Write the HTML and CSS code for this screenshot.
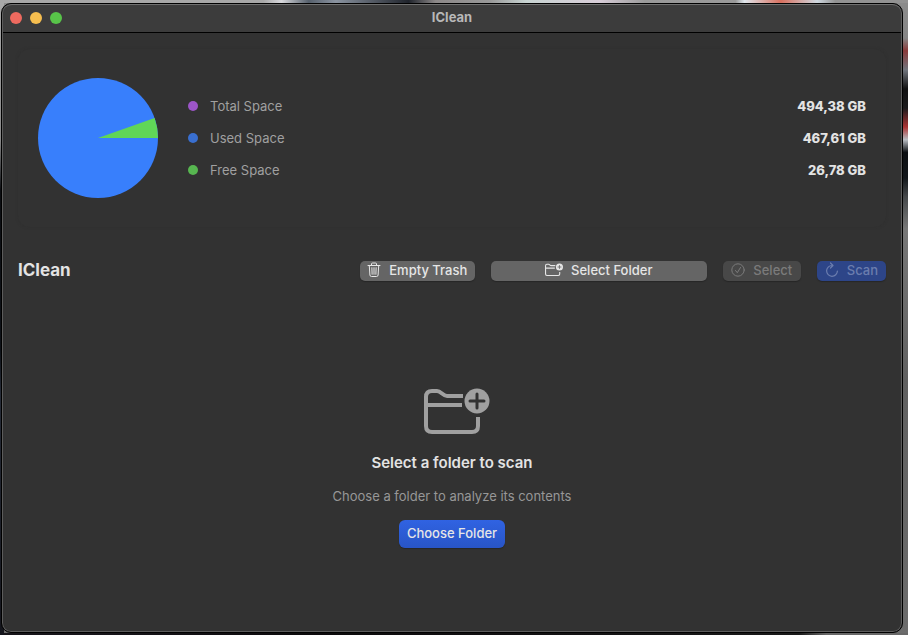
FILE: index.html
```
<!DOCTYPE html>
<html lang="en">
<head>
<meta charset="utf-8">
<title>IClean</title>
<link rel="stylesheet" href="styles.css">
</head>
<body>
<div class="window">
  <header class="titlebar">
    <div class="lights">
      <button class="light close" aria-label="Close"></button>
      <button class="light minimize" aria-label="Minimize"></button>
      <button class="light zoom" aria-label="Zoom"></button>
    </div>
    <div class="window-title">IClean</div>
  </header>
  <main class="content">
    <section class="card">
      <svg class="pie" viewBox="0 0 120 120" aria-hidden="true">
        <circle cx="60" cy="60" r="60" fill="#387ffc"/>
        <path d="M60 60H120A60 60 0 0 0 116.600 40Z" fill="#60d657"/>
      </svg>
      <dl class="legend">
        <div class="row"><dt><span class="dot total"></span>Total Space</dt><dd>494,38 GB</dd></div>
        <div class="row"><dt><span class="dot used"></span>Used Space</dt><dd>467,61 GB</dd></div>
        <div class="row"><dt><span class="dot free"></span>Free Space</dt><dd>26,78 GB</dd></div>
      </dl>
    </section>
    <div class="toolbar">
      <h1>IClean</h1>
      <button class="btn trash">
        <svg width="14" height="16" viewBox="0 0 14 16" fill="none" stroke="currentColor" stroke-linecap="round" stroke-linejoin="round"><path d="M1 3.500H13M4.500 3.300V2Q4.500 1 5.500 1H8.500Q9.500 1 9.500 2V3.300M2.300 3.700L2.900 13Q3 14.500 4.500 14.500H9.500Q11 14.500 11.100 13L11.700 3.700M4.900 5.700L5.100 12.300M7 5.700V12.300M9.100 5.700L8.900 12.300"/></svg>
        Empty Trash
      </button>
      <button class="btn folder">
        <svg width="18" height="14" viewBox="0 0 66 48" fill="none" stroke="currentColor" stroke-width="4"><path d="M38 8H22C18 8 17 3 13 3H7Q2 3 2 8V39Q2 44 7 44H49Q54 44 54 39V31M2 17H36"/><circle cx="53" cy="13" r="13" fill="currentColor" stroke="none"/><path d="M53 6V20M46 13H60" stroke="#656565" stroke-width="3"/></svg>
        Select Folder
      </button>
      <button class="btn select" disabled>
        <svg width="14" height="14" viewBox="0 0 14 14" fill="none" stroke="currentColor" stroke-linecap="round" stroke-linejoin="round"><circle cx="7" cy="7" r="6.200"/><path d="M4.500 7.500L6.300 9.700L9.500 4.500"/></svg>
        Select
      </button>
      <button class="btn scan" disabled>
        <svg width="14" height="16" viewBox="0 0 14 16" fill="none" stroke="currentColor" stroke-width="1.200" stroke-linecap="round" stroke-linejoin="round"><path d="M8 3.500H7A5.400 5.400 0 1 0 12.400 9M5.500 1L8 3.500L5.500 6"/></svg>
        Scan
      </button>
    </div>
    <section class="empty">
      <svg class="empty-icon" width="76" height="48" viewBox="-10 0 76 48" fill="none" stroke="currentColor" stroke-width="4" aria-hidden="true"><path d="M39 8H23C19 8 17 3 13 3H8Q2 3 2 9V38Q2 44 8 44H48Q54 44 54 38V29M2 17H38"/><circle cx="53" cy="13" r="12.500" fill="currentColor" stroke="none"/><path d="M53 6V20M46 13H60" stroke="#323232" stroke-width="3" stroke-linecap="round"/></svg>
      <h2>Select a folder to scan</h2>
      <p>Choose a folder to analyze its contents</p>
      <button class="btn choose">Choose Folder</button>
    </section>
  </main>
</div>
</body>
</html>
```
FILE: styles.css
```
* { box-sizing: border-box; }

body {
  margin: 0;
  min-height: 100vh;
  display: flex;
  padding: 3px 5px 2px 1px;
  background:
    linear-gradient(90deg, #a8a8a8 29%, #d8d8dc 31%, #56606c 34%, #8a93a0 37%, #20242c 45%, #8c8888 48%, #999 54%, #c8d4d2 58%, #d8cdd8 66%, #9a9a9a 71%, #999 81%, #dfe6ec 82%, #d8705f 86%, #cfd8e0 90%, #929292 92%) top / 100% 3px no-repeat,
    linear-gradient(#aaa 0, #8a8a8a 22%, #0c0e12 30%, #0e1218 55%, #262c38 62%, #14151c 100%) left / 4px 100% no-repeat,
    linear-gradient(90deg, #17151a 10%, #0c0a0c 35%, #191919 88%, #686868 91%) bottom / 100% 2px no-repeat,
    linear-gradient(#8c8c8c 0, #858585 6%, #8a3a3a 8%, #70747c 11%, #111 14%, #1a1a1c 17%, #a33 20%, #b8bcc2 22%, #0c0f12 24%, #12161a 28%, #45484a 31%, #777 36%, #606060 60%, #6c6c6c 100%);
  font-family: Inter, "Liberation Sans", sans-serif;
  font-size: 13px;
  line-height: 16px;
  color: #e3e3e3;
}

h1, h2, p, dl, dd { margin: 0; }

.window {
  flex: 1;
  display: flex;
  flex-direction: column;
  border: 1px solid #000;
  border-radius: 10px;
  background: #323232;
  box-shadow: inset 0 0 0 1px #5c5c5c;
}

.titlebar {
  display: grid;
  grid-template-columns: 1fr auto 1fr;
  align-items: center;
  height: 29px;
  margin: 0 1px;
  padding: 0 7px;
  border-bottom: 1px solid #000;
  border-top: 1px solid #707070;
  border-radius: 9px 9px 0 0;
  background: #3c3c3c;
}

.lights { display: flex; gap: 8px; padding-bottom: 2px; }

.light {
  width: 12px;
  height: 12px;
  padding: 0;
  border: 0;
  border-radius: 50%;
}

.close { background: #ee6a5f; }
.minimize { background: #f6be4f; }
.zoom { background: #58c449; }

.window-title { padding-bottom: 3px; font-weight: 700; color: #b8b8b8; }

.content {
  flex: 1;
  display: flex;
  flex-direction: column;
  padding: 16px;
}

.card {
  display: flex;
  align-items: center;
  gap: 30px;
  padding: 29px 20px;
  border-radius: 12px;
  box-shadow: 0 0 3px #2f2f2f;
  background: #323232;
}

.pie { width: 120px; height: 120px; flex: none; }

.legend {
  flex: 1;
  display: flex;
  flex-direction: column;
  gap: 16px;
}

.row { display: flex; justify-content: space-between; }

dt {
  display: flex;
  align-items: center;
  gap: 12px;
  color: #a0a0a0;
}

dd { font-weight: 800; }

.dot { width: 10px; height: 10px; border-radius: 50%; }
.total { background: #9c55c8; }
.used { background: #396fd0; }
.free { background: #57b650; }

.toolbar {
  display: flex;
  align-items: center;
  gap: 16px;
  margin-top: 34px;
}

h1 {
  flex: 1;
  padding-bottom: 2px;
  font-size: 17px;
  line-height: 18px;
  font-weight: 700;
}

.btn {
  display: flex;
  align-items: center;
  justify-content: center;
  gap: 8px;
  height: 20px;
  padding: 0 8px 2px;
  border: 0;
  border-radius: 5px;
  background: #656565;
  box-shadow: 0 1px 1px #262626;
  color: #e6e6e6;
  font: inherit;
  font-weight: 500;
  white-space: nowrap;
}

.btn svg { flex: none; }

.trash { width: 115px; }
.folder { width: 216px; }
.select { width: 78px; background: #484848; color: #7b7b7b; }
.scan { background: #2d4588; color: #6b7dae; }

.empty {
  flex: 1;
  display: flex;
  flex-direction: column;
  align-items: center;
  padding-top: 107px;
}

.empty-icon { color: #a0a0a0; }

h2 {
  margin-top: 17px;
  font-size: 15px;
  line-height: 20px;
  font-weight: 600;
}

p { margin-top: 15px; color: #979797; }

.choose {
  height: 28px;
  margin-top: 16px;
  border-radius: 6px;
  background: linear-gradient(#3063e2, #2855c6);
}
```
